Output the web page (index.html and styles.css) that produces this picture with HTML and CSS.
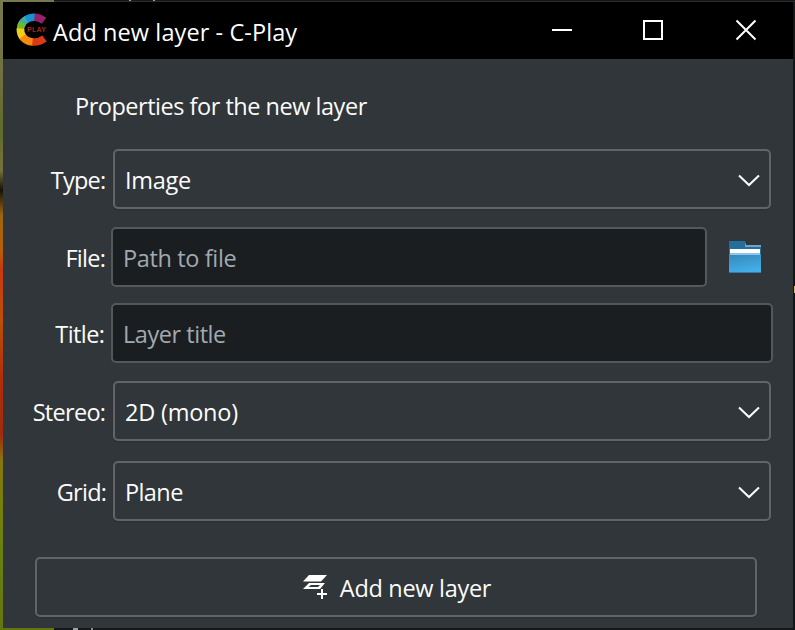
FILE: index.html
```
<!DOCTYPE html>
<html lang="en">
<head>
<meta charset="utf-8">
<title>Add new layer - C-Play</title>
<link rel="stylesheet" href="styles.css">
</head>
<body>
<main class="window">
  <header class="titlebar">
    <svg class="logo" width="32" height="34" viewBox="0 0 32 34" fill="none" stroke-width="7.5">
      <path d="M18 4.300Q23 4 28 7.800" stroke="#96206c"/>
      <path d="M10 6.500Q14 4 18.500 4.300" stroke="#1593cf"/>
      <path d="M5 13Q6.500 8.500 10.500 6.200" stroke="#46a9a0"/>
      <path d="M4.500 18Q4 14 6.500 10" stroke="#72b82d"/>
      <path d="M7.500 25Q4 21 4.500 15.500" stroke="#f2cf13"/>
      <path d="M17 29Q10 28.500 6.500 23.500" stroke="#f78a12"/>
      <path d="M16.500 29Q23 29.500 28.500 25.500" stroke="#d93b18"/>
      <text class="logo-text" x="11" y="19" stroke="none">PLAY</text>
    </svg>
    <h1 class="title t-title">Add new layer - C-Play</h1>
    <svg class="controls" width="206" height="22" viewBox="0 0 206 22" fill="none" stroke="#fff" stroke-width="2">
      <path d="M0 11H20M92 2H110V20H92Z"/>
      <path d="M184.500 1.500L203.500 20.500M203.500 1.500L184.500 20.500"/>
    </svg>
  </header>
  <form class="form">
    <h2 class="heading t-heading">Properties for the new layer</h2>
    <div class="row type">
      <label class="label"><span class="t-type">Type:</span></label>
      <div class="box combo"><span class="t-image">Image</span><svg class="chevron" width="22" height="13" viewBox="0 0 22 13"><path d="M1 1.500L11 11L21 1.500"/></svg></div>
    </div>
    <div class="row file">
      <label class="label"><span class="t-file">File:</span></label>
      <div class="box input"><span class="t-path">Path to file</span></div>
      <svg class="folder" width="32" height="32" viewBox="0 0 32 32">
        <defs><linearGradient id="front" x1="0" y1="0" x2="0.300" y2="1"><stop offset="0" stop-color="#3488ba"/><stop offset="1" stop-color="#43aee8"/></linearGradient></defs>
        <path fill="#246e9c" d="M0 0H16L17 4H32V20H0Z"/>
        <path fill="#72a4c2" d="M16 1L17 4H32V6H16Z"/>
        <path fill="#fff" d="M1 8H31V13H1Z"/>
        <path fill="url(#front)" d="M0 13H32V32H0Z"/>
        <path fill="#8bc7e8" d="M1 12H31V14H1Z"/>
        <path fill="#2e7dab" d="M0 31H32V32H0Z"/>
      </svg>
    </div>
    <div class="row titles">
      <label class="label"><span class="t-name">Title:</span></label>
      <div class="box input"><span class="t-layer">Layer title</span></div>
    </div>
    <div class="row stereo">
      <label class="label"><span class="t-stereo">Stereo:</span></label>
      <div class="box combo"><span class="t-mono">2D (mono)</span><svg class="chevron" width="22" height="13" viewBox="0 0 22 13"><path d="M1 1.500L11 11L21 1.500"/></svg></div>
    </div>
    <div class="row grid">
      <label class="label"><span class="t-grid">Grid:</span></label>
      <div class="box combo"><span class="t-plane">Plane</span><svg class="chevron" width="22" height="13" viewBox="0 0 22 13"><path d="M1 1.500L11 11L21 1.500"/></svg></div>
    </div>
    <button class="box submit" type="button">
      <svg class="layers" width="25" height="25" viewBox="0 0 25 25">
        <path fill="#fff" d="M6 0H24L18 6.500H0Z"/>
        <path fill="#fff" fill-rule="evenodd" d="M6 8H22L17 14H0ZM8 10L5.500 12H15L17 10Z"/>
        <path fill="#fff" d="M18 14H20V18H24V20H20V24H18V20H14V18H18Z"/>
      </svg>
      <span class="t-submit">Add new layer</span>
    </button>
  </form>
</main>
</body>
</html>
```
FILE: styles.css
```
* { box-sizing: border-box; }
body {
  margin: 0;
  width: 795px;
  height: 630px;
  overflow: hidden;
  padding: 2px 2px 3px 3px;
  font: 23.5px/32px "Open Sans", "Noto Sans", sans-serif;
  color: #fcfcfc;
  background:
    linear-gradient(#a0a0a0, #a0a0a0) 73px 628px / 5px 2px no-repeat,
    linear-gradient(#8c8c8c, #8c8c8c) 91px 628px / 2px 2px no-repeat,
    linear-gradient(#a0a0a0, #a0a0a0) 129px 0 / 2px 1px no-repeat,
    linear-gradient(#a0a0a0, #a0a0a0) 153px 0 / 2px 1px no-repeat,
    linear-gradient(#e0ba68, #e0ba68) 794px 286px / 1px 7px no-repeat,
    linear-gradient(#292d30, #292d30) 54px 1px / 741px 1px no-repeat,
    linear-gradient(#141618, #141618) 54px 0 / 741px 630px no-repeat,
    linear-gradient(#777850 0, #70703f 80px, #5e6c2c 130px, #78713c 170px, #14130a 190px, #9b6510 215px, #b66009 250px, #c83812 270px, #bd5008 320px, #b12d0b 380px, #a02b0c 435px, #89750f 460px, #73800c 510px, #668010 560px, #65750d 630px);
}
h1, h2 { margin: 0; font: inherit; }
.window { height: 626px; width: 790px; background: #31363a; }
.titlebar { display: flex; align-items: center; height: 57px; padding: 0 35px 0 13px; background: #000; }
.logo { flex: none; margin-bottom: 1px; }
.logo-text { font: bold 7px "Liberation Sans", sans-serif; fill: #a52b16; letter-spacing: .3px; }
.title { margin-left: 5px; padding-top: 2px; color: #fff; white-space: nowrap; }
.controls { margin-left: auto; margin-bottom: 1px; }
.form { display: flex; flex-direction: column; padding-top: 31px; }
.heading { height: 32px; margin-left: 72px; white-space: nowrap; }
.row { display: flex; height: 60px; align-items: stretch; }
.label { display: flex; justify-content: flex-end; align-items: center; width: 103px; margin-right: 7px; padding-top: 1px; white-space: nowrap; }
.label span { margin-right: .7px; }
.box { display: flex; align-items: center; border: 2px solid #616569; border-radius: 5px; white-space: nowrap; }
.combo { width: 658px; justify-content: space-between; padding: 1px 9px 0 10px; box-shadow: 0 1px 1px #2b2f33; }
.chevron { margin-top: 1px; fill: none; stroke: #fcfcfc; stroke-width: 2; }
.input { width: 662px; padding: 1px 10px 0; border-color: #54585b; background: #1b1e20; color: #a1a9b1; }
.type { margin-top: 27px; }
.file { margin-top: 18px; }
.titles { margin-top: 16px; }
.stereo { margin-top: 18px; }
.grid { margin-top: 20px; }
.file .label, .titles .label { width: 102px; margin-right: 6px; }
.file .label { width: 103px; margin-right: 5px; }
.file .input { width: 596px; }
.grid .label { width: 104px; margin-right: 6px; }
.folder { margin: 14px 0 0 22px; }
.submit { width: 722px; height: 60px; margin: 36px 0 0 32px; padding: 1px 0 0 2px; justify-content: center; gap: 12px; background: transparent; color: inherit; font: inherit; box-shadow: 0 1px 1px #2b2f33; }
.layers { margin-bottom: 1px; }
.t-title { letter-spacing: .09px; }
.t-heading { letter-spacing: -.48px; }
.t-type { letter-spacing: -.8px; }
.t-image { letter-spacing: -.3px; }
.t-file { letter-spacing: -.7px; }
.t-path { letter-spacing: -.36px; }
.t-name { letter-spacing: -.6px; }
.t-layer { letter-spacing: -.46px; }
.t-stereo { letter-spacing: -.7px; }
.t-mono { letter-spacing: -.22px; }
.t-grid { letter-spacing: -.7px; }
.t-plane { letter-spacing: -.6px; }
.t-submit { letter-spacing: -.3px; }
```
